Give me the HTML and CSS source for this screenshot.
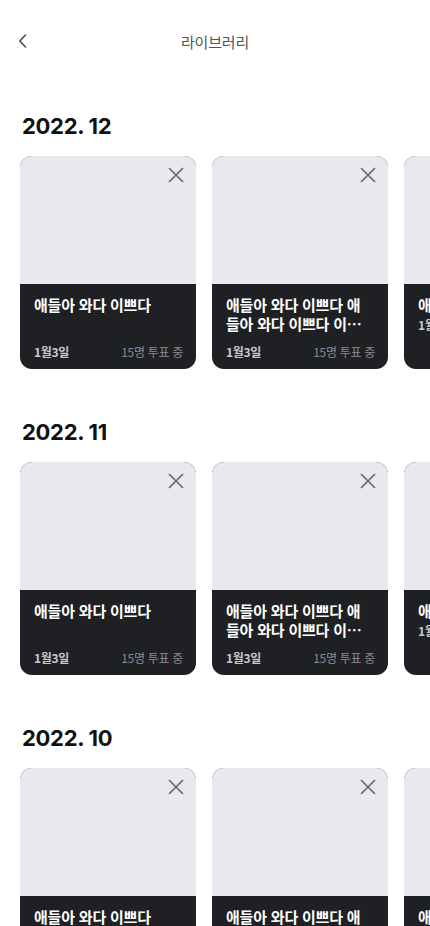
FILE: index.html
```html
<!DOCTYPE html>
<html lang="ko">
<head>
<meta charset="utf-8">
<title>라이브러리</title>
<link rel="stylesheet" href="styles.css">
</head>
<body>
<header class="topbar">
  <button class="back" aria-label="뒤로">
    <svg width="10" height="14" viewBox="0 0 10 14"><path d="M7.5 1 L1.8 7 L7.5 13" fill="none" stroke="#444" stroke-width="1.5" stroke-linecap="round" stroke-linejoin="round"/></svg>
  </button>
  <h1 class="title">라이브러리</h1>
</header>
<main class="library">
  <section class="month">
    <h2 class="month-title">2022. 12</h2>
    <div class="row">
      <article class="card"><div class="thumb"><svg class="close" width="16" height="16" viewBox="0 0 16 16"><path d="M1 1 L15 15 M15 1 L1 15" stroke="#666" stroke-width="1.6"/></svg></div><div class="info"><p class="name">애들아 와다 이쁘다</p><div class="meta"><span class="date">1월3일</span><span class="votes">15명 투표 중</span></div></div></article>
      <article class="card"><div class="thumb"><svg class="close" width="16" height="16" viewBox="0 0 16 16"><path d="M1 1 L15 15 M15 1 L1 15" stroke="#666" stroke-width="1.6"/></svg></div><div class="info"><p class="name">애들아 와다 이쁘다 애들아 와다 이쁘다 이쁘다</p><div class="meta"><span class="date">1월3일</span><span class="votes">15명 투표 중</span></div></div></article>
      <article class="card compact"><div class="thumb"><svg class="close" width="16" height="16" viewBox="0 0 16 16"><path d="M1 1 L15 15 M15 1 L1 15" stroke="#666" stroke-width="1.6"/></svg></div><div class="info"><p class="name">애들아 와다 이쁘다</p><div class="meta"><span class="date">1월3일</span><span class="votes">15명 투표 중</span></div></div></article>
    </div>
  </section>
  <section class="month">
    <h2 class="month-title">2022. 11</h2>
    <div class="row">
      <article class="card"><div class="thumb"><svg class="close" width="16" height="16" viewBox="0 0 16 16"><path d="M1 1 L15 15 M15 1 L1 15" stroke="#666" stroke-width="1.6"/></svg></div><div class="info"><p class="name">애들아 와다 이쁘다</p><div class="meta"><span class="date">1월3일</span><span class="votes">15명 투표 중</span></div></div></article>
      <article class="card"><div class="thumb"><svg class="close" width="16" height="16" viewBox="0 0 16 16"><path d="M1 1 L15 15 M15 1 L1 15" stroke="#666" stroke-width="1.6"/></svg></div><div class="info"><p class="name">애들아 와다 이쁘다 애들아 와다 이쁘다 이쁘다</p><div class="meta"><span class="date">1월3일</span><span class="votes">15명 투표 중</span></div></div></article>
      <article class="card compact"><div class="thumb"><svg class="close" width="16" height="16" viewBox="0 0 16 16"><path d="M1 1 L15 15 M15 1 L1 15" stroke="#666" stroke-width="1.6"/></svg></div><div class="info"><p class="name">애들아 와다 이쁘다</p><div class="meta"><span class="date">1월3일</span><span class="votes">15명 투표 중</span></div></div></article>
    </div>
  </section>
  <section class="month">
    <h2 class="month-title">2022. 10</h2>
    <div class="row">
      <article class="card"><div class="thumb"><svg class="close" width="16" height="16" viewBox="0 0 16 16"><path d="M1 1 L15 15 M15 1 L1 15" stroke="#666" stroke-width="1.6"/></svg></div><div class="info"><p class="name">애들아 와다 이쁘다</p><div class="meta"><span class="date">1월3일</span><span class="votes">15명 투표 중</span></div></div></article>
      <article class="card"><div class="thumb"><svg class="close" width="16" height="16" viewBox="0 0 16 16"><path d="M1 1 L15 15 M15 1 L1 15" stroke="#666" stroke-width="1.6"/></svg></div><div class="info"><p class="name">애들아 와다 이쁘다 애들아 와다 이쁘다 이쁘다</p><div class="meta"><span class="date">1월3일</span><span class="votes">15명 투표 중</span></div></div></article>
      <article class="card compact"><div class="thumb"><svg class="close" width="16" height="16" viewBox="0 0 16 16"><path d="M1 1 L15 15 M15 1 L1 15" stroke="#666" stroke-width="1.6"/></svg></div><div class="info"><p class="name">애들아 와다 이쁘다</p><div class="meta"><span class="date">1월3일</span><span class="votes">15명 투표 중</span></div></div></article>
    </div>
  </section>
</main>
</body>
</html>
```
FILE: styles.css
```css
* { box-sizing: border-box; }
html, body { margin: 0; padding: 0; }
body {
  width: 430px;
  height: 926px;
  overflow: hidden;
  background: #fff;
  font-family: Inter, "Noto Sans CJK KR", sans-serif;
  color: #111;
}
.topbar {
  position: relative;
  height: 82px;
  display: flex;
  align-items: center;
  justify-content: center;
}
.back {
  position: absolute;
  left: 18px;
  top: 34px;
  width: 12px;
  height: 14px;
  padding: 0;
  border: 0;
  background: none;
  display: flex;
}
.title {
  margin: 0;
  font-family: "Noto Sans CJK KR", sans-serif;
  font-size: 15px;
  font-weight: 400;
  color: #555;
  letter-spacing: -0.2px;
}
.library {
  padding-top: 29px;
  display: flex;
  flex-direction: column;
  gap: 48px;
}
.month-title {
  margin: 0 0 15px 22px;
  height: 30px;
  line-height: 30px;
  font-size: 22px;
  font-weight: 700;
  color: #111;
  letter-spacing: -0.3px;
}
.row {
  display: flex;
  gap: 16px;
  padding-left: 20px;
  overflow: hidden;
}
.card {
  flex: 0 0 176px;
  height: 213px;
  border-radius: 12px;
  overflow: hidden;
  display: flex;
  flex-direction: column;
  background: #1f2023;
}
.thumb {
  position: relative;
  height: 128px;
  background: #e7e9ee;
}
.close {
  position: absolute;
  top: 11px;
  right: 12px;
}
.info {
  flex: 1;
  display: flex;
  flex-direction: column;
  padding: 11px 13px 9px 14px;
}
.name {
  margin: 0;
  padding-right: 5px;
  font-family: "Noto Sans CJK KR", sans-serif;
  font-size: 15px;
  font-weight: 700;
  line-height: 19px;
  color: #fff;
  letter-spacing: -0.2px;
  word-break: break-all;
  display: -webkit-box;
  -webkit-line-clamp: 2;
  -webkit-box-orient: vertical;
  overflow: hidden;
}
.meta {
  margin-top: auto;
  display: flex;
  justify-content: space-between;
  font-family: "Noto Sans CJK KR", sans-serif;
  font-size: 12px;
  line-height: 16px;
  letter-spacing: -0.3px;
}
.compact .meta { margin-top: 3px; }
.date { color: #c9cacd; font-weight: 700; }
.votes { color: #8b8c90; }
```
